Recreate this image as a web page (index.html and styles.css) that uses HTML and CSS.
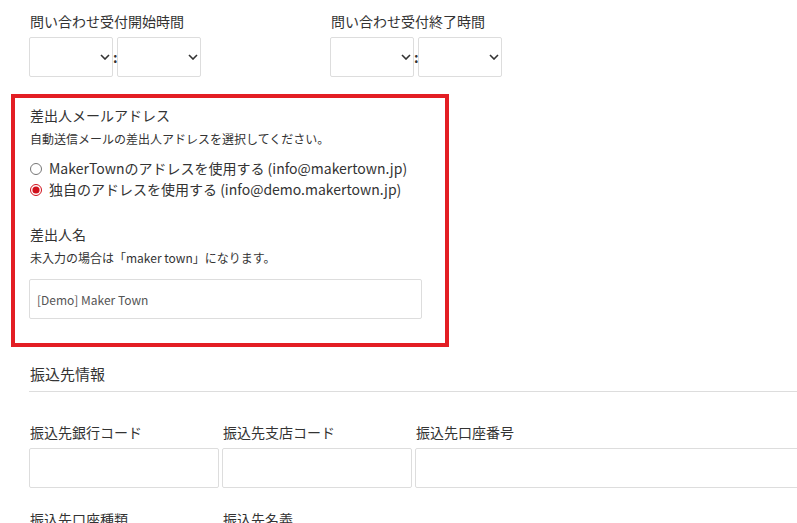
FILE: index.html
```html
<!DOCTYPE html>
<html lang="ja">
<head>
    <meta charset="UTF-8">
    <title>設定</title>
    <link rel="stylesheet" href="styles.css">
</head>
<body>
    <div class="container">
        <div class="time-row">
            <div class="time-group">
                <label class="field-label">問い合わせ受付開始時間</label>
                <div class="time-selects">
                    <span class="select-wrap">
                        <select><option></option></select>
                        <svg class="chev" width="10" height="6" viewBox="0 0 10 6"><path d="M1 1l4 4 4-4" fill="none" stroke="#333" stroke-width="1.6"/></svg>
                    </span>
                    <span class="colon">:</span>
                    <span class="select-wrap">
                        <select><option></option></select>
                        <svg class="chev" width="10" height="6" viewBox="0 0 10 6"><path d="M1 1l4 4 4-4" fill="none" stroke="#333" stroke-width="1.6"/></svg>
                    </span>
                </div>
            </div>
            <div class="time-group">
                <label class="field-label">問い合わせ受付終了時間</label>
                <div class="time-selects">
                    <span class="select-wrap">
                        <select><option></option></select>
                        <svg class="chev" width="10" height="6" viewBox="0 0 10 6"><path d="M1 1l4 4 4-4" fill="none" stroke="#333" stroke-width="1.6"/></svg>
                    </span>
                    <span class="colon">:</span>
                    <span class="select-wrap">
                        <select><option></option></select>
                        <svg class="chev" width="10" height="6" viewBox="0 0 10 6"><path d="M1 1l4 4 4-4" fill="none" stroke="#333" stroke-width="1.6"/></svg>
                    </span>
                </div>
            </div>
        </div>

        <div class="highlight">
            <div class="field-title">差出人メールアドレス</div>
            <div class="field-note">自動送信メールの差出人アドレスを選択してください。</div>
            <div class="radios">
                <label class="radio"><input type="radio" name="from"> MakerTownのアドレスを使用する (info@makertown.jp)</label>
                <label class="radio"><input type="radio" name="from" checked> 独自のアドレスを使用する (info@demo.makertown.jp)</label>
            </div>

            <div class="field-title name-title">差出人名</div>
            <div class="field-note">未入力の場合は「maker town」になります。</div>
            <input type="text" class="text-input name-input" value="[Demo] Maker Town">
        </div>

        <h3 class="section-title">振込先情報</h3>

        <div class="bank-row">
            <div class="bank-col">
                <label class="field-label">振込先銀行コード</label>
                <input type="text" class="text-input">
            </div>
            <div class="bank-col">
                <label class="field-label">振込先支店コード</label>
                <input type="text" class="text-input">
            </div>
            <div class="bank-col wide">
                <label class="field-label">振込先口座番号</label>
                <input type="text" class="text-input">
            </div>
        </div>

        <div class="bank-row next">
            <div class="bank-col">
                <label class="field-label">振込先口座種類</label>
            </div>
            <div class="bank-col">
                <label class="field-label">振込先名義</label>
            </div>
        </div>
    </div>
</body>
</html>
```

FILE: styles.css
```css
body {
    margin: 0;
    font-family: "Noto Sans CJK JP", "Noto Sans", sans-serif;
    color: #333;
    background: #fff;
    overflow: hidden;
}
.container {
    padding: 10px 0 0 29px;
}
.field-label {
    display: block;
    font-size: 14px;
    line-height: 22px;
    margin-bottom: 5px;
    padding-left: 1px;
}
.time-row {
    display: flex;
}
.time-group {
    width: 301px;
}
.time-selects {
    display: flex;
    align-items: center;
}
.select-wrap {
    position: relative;
    display: inline-block;
}
.select-wrap select {
    appearance: none;
    -webkit-appearance: none;
    width: 84px;
    height: 40px;
    border: 1px solid #ddd;
    border-radius: 2px;
    background: #fff;
    display: block;
}
.chev {
    position: absolute;
    right: 3px;
    top: 17px;
}
.colon {
    width: 4px;
    text-align: center;
    font-size: 14px;
    font-weight: bold;
    color: #333;
}
.highlight {
    margin: 17px 0 0 -18px;
    width: 416px;
    border: 4px solid #e31e24;
    padding: 5px 0 24px 14px;
}
.field-title {
    font-size: 14px;
    line-height: 24px;
    padding-left: 1px;
}
.field-note {
    font-size: 12px;
    line-height: 20px;
    margin-top: 2px;
    padding-left: 1px;
}
.radios {
    margin-top: 9px;
}
.radio {
    display: flex;
    align-items: center;
    font-size: 14px;
    line-height: 21px;
}
.radio input {
    margin: 0 7px 0 1px;
    width: 12px;
    height: 12px;
    accent-color: #d0101b;
}
.name-title {
    margin-top: 22px;
}
.text-input {
    box-sizing: border-box;
    height: 40px;
    border: 1px solid #ddd;
    border-radius: 2px;
    font-family: inherit;
    font-size: 12px;
    color: #555;
    padding: 0 7px;
    width: 100%;
}
.name-input {
    width: 393px;
    margin-top: 11px;
    display: block;
}
.section-title {
    font-size: 15px;
    font-weight: normal;
    margin: 15px 0 0 0;
    padding: 0 0 5px 1px;
    line-height: 24px;
    border-bottom: 1px solid #ddd;
}
.bank-row {
    display: flex;
    gap: 3px;
    margin-top: 29px;
    overflow: hidden;
}
.bank-col {
    width: 190px;
    flex: none;
}
.bank-col.wide {
    width: 420px;
}
.bank-row.next {
    margin-top: 20px;
}
```
